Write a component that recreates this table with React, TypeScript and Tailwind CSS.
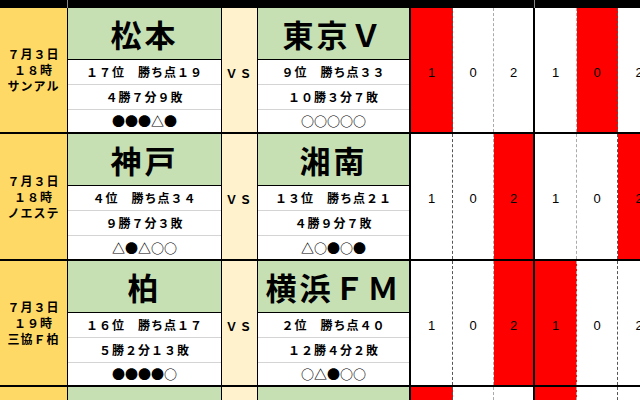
import React from "react";

type Team = { name: string; rank: string; rec: string; form: string };
type Block = {
  date: string;
  time: string;
  venue: string;
  home: Team;
  away: Team;
  red: number[];
  h: string;
};

const blocks: Block[] = [
  {
    date: "７月３日",
    time: "１８時",
    venue: "サンアル",
    home: { name: "松本", rank: "１７位　勝ち点１９", rec: "４勝７分９敗", form: "●●●△●" },
    away: { name: "東京Ｖ", rank: "９位　勝ち点３３", rec: "１０勝３分７敗", form: "○○○○○" },
    red: [0, 4],
    h: "h-[126px]",
  },
  {
    date: "７月３日",
    time: "１８時",
    venue: "ノエステ",
    home: { name: "神戸", rank: "４位　勝ち点３４", rec: "９勝７分３敗", form: "△●△○○" },
    away: { name: "湘南", rank: "１３位　勝ち点２１", rec: "４勝９分７敗", form: "△○●○●" },
    red: [2, 5],
    h: "h-[127px]",
  },
  {
    date: "７月３日",
    time: "１９時",
    venue: "三協Ｆ柏",
    home: { name: "柏", rank: "１６位　勝ち点１７", rec: "５勝２分１３敗", form: "●●●●○" },
    away: { name: "横浜ＦＭ", rank: "２位　勝ち点４０", rec: "１２勝４分２敗", form: "○△●○○" },
    red: [2, 3],
    h: "h-[126px]",
  },
  {
    date: "",
    time: "",
    venue: "",
    home: { name: "", rank: "", rec: "", form: "" },
    away: { name: "", rank: "", rec: "", form: "" },
    red: [0, 3],
    h: "h-[126px]",
  },
];

const scores = ["1", "0", "2", "1", "0", "2"];

const scoreCols = [
  "w-[42px] border-r border-dashed border-[#555]",
  "w-[41px] border-r border-dashed border-[#aaa]",
  "w-[41px] border-r-2 border-solid border-black",
  "w-[42px] border-r border-dashed border-[#aaa]",
  "w-[41px] border-r border-dashed border-[#555]",
  "w-[42px]",
];

const jp = "font-['Noto_Sans_CJK_JP',sans-serif]";

function TeamCell({ t, w, border }: { t: Team; w: string; border: string }) {
  return (
    <div className={`${w} ${border} shrink-0 flex flex-col h-full`}>
      <div className="h-[52px] shrink-0 bg-[#c6e0b4] border-b border-black flex items-center justify-center">
        <span className="text-[31px] font-bold leading-none tracking-[3px] text-black">{t.name}</span>
      </div>
      <div className="h-[25px] shrink-0 bg-white border-b border-[#d4d4d4] flex items-center justify-center text-[12px] font-bold tracking-[1px]">
        {t.rank}
      </div>
      <div className="h-[25px] shrink-0 bg-white border-b border-[#d4d4d4] flex items-center justify-center text-[12px] font-bold tracking-[1px]">
        {t.rec}
      </div>
      <div className="flex-1 bg-white flex items-center justify-center text-[13px] font-bold">
        {t.form}
      </div>
    </div>
  );
}

export default function App() {
  return (
    <div className={`w-[640px] h-[400px] overflow-hidden bg-white text-black ${jp}`}>
      <div className="flex h-[8px] bg-black w-[700px]">
        <div className="w-[68px] shrink-0 border-r border-[#888]" />
        <div className="w-[467px] shrink-0 border-r border-[#888]" />
        <div className="flex-1" />
      </div>
      {blocks.map((b, i) => (
        <div key={i} className={`flex ${b.h} w-[700px] border-b-2 border-black`}>
          <div className="w-[68px] shrink-0 bg-[#ffd966] border-r border-black flex flex-col items-center justify-center text-[12px] font-bold leading-[16px] tracking-[1px]">
            <div>{b.date}</div>
            <div>{b.time}</div>
            <div className="whitespace-nowrap">{b.venue}</div>
          </div>
          <TeamCell t={b.home} w="w-[154px]" border="border-r border-black" />
          <div className="w-[36px] shrink-0 bg-[#fff2cc] border-r border-black flex flex-col">
            <div className="h-[52px] shrink-0" />
            <div className="h-[25px] flex items-center justify-center text-[12px] font-bold tracking-[2px]">
              {b.date ? "ＶＳ" : ""}
            </div>
          </div>
          <TeamCell t={b.away} w="w-[153px]" border="border-r-2 border-black" />
          {scoreCols.map((c, j) => (
            <div
              key={j}
              className={`${c} shrink-0 flex flex-col ${b.red.includes(j) ? "bg-[#ff0000]" : "bg-white"}`}
            >
              <div className="h-[52px] shrink-0" />
              <div className="h-[25px] flex items-center justify-center text-[13px] font-['Liberation_Sans',sans-serif]">
                {b.date ? scores[j] : ""}
              </div>
            </div>
          ))}
        </div>
      ))}
    </div>
  );
}
